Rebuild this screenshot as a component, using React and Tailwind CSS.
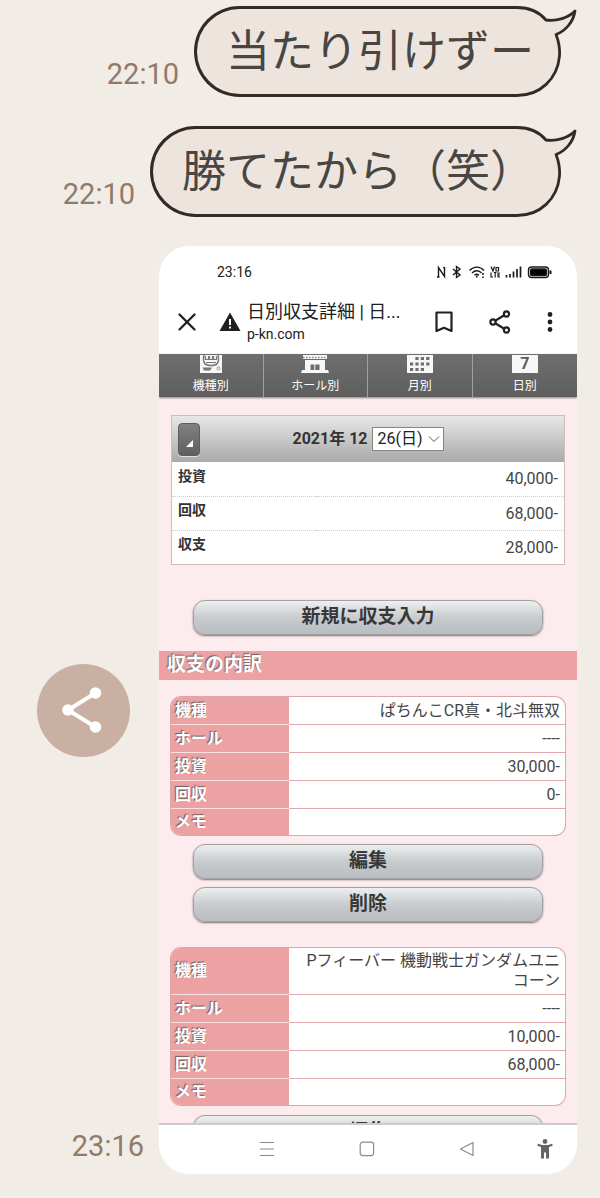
import React from 'react';
import { X } from 'lucide-react';

const summary = [
  { label: '投資', value: '40,000-' },
  { label: '回収', value: '68,000-' },
  { label: '収支', value: '28,000-' },
];

const records = [
  [
    { label: '機種', value: 'ぱちんこCR真・北斗無双' },
    { label: 'ホール', value: '----' },
    { label: '投資', value: '30,000-' },
    { label: '回収', value: '0-' },
    { label: 'メモ', value: '' },
  ],
  [
    { label: '機種', value: 'Pフィーバー 機動戦士ガンダムユニコーン' },
    { label: 'ホール', value: '----' },
    { label: '投資', value: '10,000-' },
    { label: '回収', value: '68,000-' },
    { label: 'メモ', value: '' },
  ],
];

function Time({ children }) {
  return <time className="text-[29px] leading-9 text-[#907b6a]">{children}</time>;
}

function Bubble({ time, children }) {
  return (
    <div className="flex items-end justify-end gap-[15px]">
      <div className="pb-[5px]">
        <Time>{time}</Time>
      </div>
      <div className="relative flex h-[91px] items-center pl-8 pr-[43px]">
        {/* Bubble outline: round left end + right cap with the tail */}
        <div className="absolute inset-0 flex">
          <div className="flex-1 rounded-l-full border-y-3 border-l-3 border-[#332a26] bg-[#ede5dd]" />
          <svg viewBox="0 0 64 91" className="h-full w-16" fill="none">
            <path
              d="M0 1.5H4C17 1.5 27 7 33 14C44 15.5 55 12 62 5C60.5 15 53.5 24.5 43 28.5C46 36 47 43 46.5 50C44.5 73 27 89.5 4 89.5H0"
              fill="#ede5dd"
              stroke="#332a26"
              strokeWidth="2.8"
              strokeLinejoin="round"
            />
          </svg>
        </div>
        <p className="relative whitespace-nowrap text-[44px] leading-[52px] text-[#484543]">{children}</p>
      </div>
    </div>
  );
}

function StatusIcons() {
  return (
    <svg viewBox="0 0 116 16" className="h-4 w-[116px]" fill="none" stroke="#1a1a1a" strokeWidth="1.4">
      {/* NFC */}
      <path d="M2.5 13V3.5L8.5 12.5V3M1 13H3.5M7.5 3L9 5" />
      {/* Bluetooth */}
      <path d="M17 5L24 11L20.5 13.5V2.5L24 5L17 11" />
      {/* Wi-Fi */}
      <path d="M33.5 6.5C38 2 44 2 48 6.5M36 9C39 6 43 6 45.5 9M38.5 11.2C40 9.8 41.5 9.8 43 11.2" />
      <path d="M40.8 11.5V13.5M47 9V11M47 12.5V14" strokeWidth="1.6" />
      {/* VoLTE */}
      <path d="M55 2.5L57 7L58.5 2.5M60 3.5H62.5V7H60ZM55 8.5V13H57M58 8.5H60.5M59.2 8.5V13.5M64 9H62V13H64M62 11H64" strokeWidth="1.2" />
      {/* Signal */}
      <path d="M70.5 11V13.5M74 10V13.5M77.5 7.5V13.5M81 5V13.5M84.5 2.5V13.5" strokeWidth="1.7" />
      {/* Battery */}
      <rect x="92.5" y="3" width="20" height="10.5" rx="3" />
      <rect x="94.5" y="5" width="16" height="6.5" rx="1.5" fill="#000" />
      <path d="M114.5 6.5V10" strokeWidth="2" />
    </svg>
  );
}

function MachineIcon() {
  return (
    <svg viewBox="0 0 24 19" className="h-[19px] w-6">
      <path d="M1 1H23V19H1Z" fill="#f7f7f7" />
      <path d="M5 1C3 10 7 11.5 12 11.5C17 11.5 21 10 19 1" fill="none" stroke="#777" strokeWidth="1.5" />
      <path d="M6.5 2V5.5H9.5V2M10.5 2V5.5H13.5V2M14.5 2V5.5H17.5V2M7 8.5H17" fill="none" stroke="#777" strokeWidth="1.2" />
      <path d="M3.5 13.5H13L11 16.5H5Z" fill="#777" />
      <circle cx="19.5" cy="14.5" r="1.5" fill="none" stroke="#999" />
    </svg>
  );
}

function HallIcon() {
  return (
    <svg viewBox="0 0 28 19" className="h-[19px] w-7">
      <path d="M2 1H26V5H2ZM4 6H24V16H27L28 19H0L1 16H4Z" fill="#f7f7f7" />
      <path d="M2 3.5H26" stroke="#888" strokeWidth="1.5" strokeDasharray="1.5 1.5" />
      <path d="M9.5 10.5H13.3V16H9.5ZM14.3 10.5H18.5V16H14.3Z" fill="#6d6d6d" />
    </svg>
  );
}

function MonthIcon() {
  return (
    <svg viewBox="0 0 26 19" className="h-[19px] w-[26px]">
      <path d="M0 1H26V19H0Z" fill="#f7f7f7" />
      <path d="M8.4 4.5H24M3 10H24M3 15.5H18" stroke="#6d6d6d" strokeWidth="3.2" strokeDasharray="3.2 2.2" />
    </svg>
  );
}

function DayIcon() {
  return (
    <span className="mt-px flex h-[18px] w-[26px] items-center justify-center bg-[#f7f7f7] text-base font-bold leading-none text-[#5c5c5c]">
      7
    </span>
  );
}

const tabs = [
  { label: '機種別', icon: <MachineIcon /> },
  { label: 'ホール別', icon: <HallIcon /> },
  { label: '月別', icon: <MonthIcon /> },
  { label: '日別', icon: <DayIcon /> },
];

function BrowserBar() {
  return (
    <header className="bg-white text-[#202020]">
      <div className="flex h-[52px] items-center justify-between pl-[58px] pr-[25px]">
        <span className="text-sm leading-5">23:16</span>
        <StatusIcons />
      </div>
      <div className="flex h-14 items-center pb-2 pl-3 pr-5">
        <button aria-label="閉じる" className="px-px">
          <X size={30} strokeWidth={1.8} />
        </button>
        <svg viewBox="0 0 22 20" className="ml-4 h-5 w-[22px] shrink-0">
          <path d="M11 0.5L21.5 19H0.5Z" fill="#202020" />
          <path d="M11 7V13M11 14.5V16.5" stroke="#fff" strokeWidth="2" />
        </svg>
        <div className="ml-1.5 min-w-0 flex-1">
          <p className="whitespace-nowrap text-lg leading-6">日別収支詳細 | 日...</p>
          <p className="text-sm leading-5">p-kn.com</p>
        </div>
        <div className="flex shrink-0 items-center">
          <button aria-label="ブックマーク">
            <svg viewBox="0 0 18 22" className="h-[22px] w-[18px]" fill="none" stroke="#202020" strokeWidth="2.2">
              <path d="M1.5 1.5H16.5V20L9 16.8L1.5 20Z" strokeLinejoin="round" />
            </svg>
          </button>
          <button aria-label="共有" className="ml-9">
            <svg viewBox="0 0 22 24" className="h-6 w-[22px]" fill="none" stroke="#202020" strokeWidth="2.2">
              <circle cx="17.5" cy="4" r="2.6" />
              <circle cx="4" cy="12" r="2.6" />
              <circle cx="17.5" cy="20" r="2.6" />
              <path d="M6.2 10.7L15.2 5.3M6.2 13.3L15.2 18.7" />
            </svg>
          </button>
          <button aria-label="メニュー" className="ml-8">
            <svg viewBox="0 0 14 22" className="h-[22px] w-3.5" fill="#202020">
              <circle cx="7" cy="3.5" r="2.4" />
              <circle cx="7" cy="11" r="2.4" />
              <circle cx="7" cy="18.5" r="2.4" />
            </svg>
          </button>
        </div>
      </div>
    </header>
  );
}

function GlossyButton({ children }) {
  return (
    <button className="block h-[35px] w-full rounded-xl border border-[#a39fa2] bg-linear-to-b from-[#edf0f0] via-[#c9ccce] via-50% to-[#b9bcc0] pb-0.5 text-[19px] font-bold leading-7 text-[#383838] shadow-[0_1px_2px_#777174]">
      {children}
    </button>
  );
}

function RecordTable({ rows }) {
  return (
    <div className="mx-3 overflow-hidden rounded-[10px] bg-white ring-1 ring-[#e0a5a8]">
      <table className="w-full table-fixed border-separate border-spacing-0 text-base leading-5">
        <tbody>
          {rows.map((row) => (
            <tr key={row.label} className="group h-7 last:h-[26px]">
              <th className="w-[118px] border-b border-[#fbe3e3] bg-[#eca1a2] pl-1 text-left font-bold text-white group-last:border-b-0 [text-shadow:-1px_-1px_1px_#6f5f62]">
                {row.label}
              </th>
              <td className="border-b border-[#dfa9ab] py-[3px] pl-1 pr-[5px] text-right text-[#454545] group-last:border-b-0">
                {row.value}
              </td>
            </tr>
          ))}
        </tbody>
      </table>
    </div>
  );
}

function DaySummary() {
  return (
    <section className="mx-3 border border-[#c9bfc0] bg-white text-[#333]">
      <div className="relative flex h-[46px] items-center justify-center gap-1 bg-linear-to-b from-[#e8e8e8] to-[#a9a9a9]">
        <button
          aria-label="前の日"
          className="absolute left-1.5 flex h-[33px] w-[22px] items-center justify-center rounded border border-[#5e5e5e] bg-linear-to-b from-[#808080] to-[#606060] pt-2 shadow-[0_1px_0_#e2e2e2]"
        >
          <svg viewBox="0 0 7 7" className="h-[7px] w-[7px]">
            <path d="M7 0V7H0Z" fill="#fff" />
          </svg>
        </button>
        <label htmlFor="day" className="text-base font-bold">2021年 12</label>
        <div className="relative">
          <select
            id="day"
            className="h-6 w-[72px] appearance-none border border-[#858585] bg-white pl-[5px] text-base leading-5 text-[#222]"
          >
            <option>26(日)</option>
          </select>
          <svg viewBox="0 0 12 8" className="pointer-events-none absolute right-1 top-2 h-2 w-3" fill="none" stroke="#555">
            <path d="M1 1.5L6 6.5L11 1.5" />
          </svg>
        </div>
      </div>
      <table className="w-full border-collapse">
        <tbody>
          {summary.map((row) => (
            <tr key={row.label} className="h-[34px] border-b border-dotted border-[#ccc] last:border-b-0">
              <th className="pb-1.5 pl-1.5 text-left text-sm font-bold">{row.label}</th>
              <td className="pr-1.5 pt-px text-right text-base text-[#454545]">{row.value}</td>
            </tr>
          ))}
        </tbody>
      </table>
    </section>
  );
}

function PhoneNav() {
  return (
    <footer className="flex h-[51px] items-center justify-end border-t-2 border-[#d3c9cb] bg-white pb-0.5 pr-6">
      <button aria-label="履歴" className="mr-[84px]">
        <svg viewBox="0 0 16 16" className="h-4 w-4" stroke="#8a8a8a" strokeWidth="1.2">
          <path d="M1 1.5H15M1 8H15M1 14.5H15" />
        </svg>
      </button>
      <button aria-label="ホーム" className="mr-[84px]">
        <svg viewBox="0 0 16 16" className="h-4 w-4" fill="none" stroke="#8a8a8a" strokeWidth="1.2">
          <rect x="1.2" y="1.2" width="13.4" height="13.4" rx="2.5" />
        </svg>
      </button>
      <button aria-label="戻る" className="mr-[62px]">
        <svg viewBox="0 0 16 16" className="h-4 w-4" fill="none" stroke="#8a8a8a" strokeWidth="1.2">
          <path d="M14 1.5V14.5L1.5 8Z" strokeLinejoin="round" />
        </svg>
      </button>
      <button aria-label="ユーザー補助">
        <svg viewBox="0 0 16 20" className="h-5 w-4" fill="#666">
          <circle cx="8" cy="2.5" r="2.4" />
          <path d="M0.8 4.8L5 6H11L15.2 4.8L15.7 6.8L12 8V19.5H9V13.5H7V19.5H4V8L0.3 6.8Z" />
        </svg>
      </button>
    </footer>
  );
}

function PhoneScreen() {
  return (
    <div className="min-w-0 flex-1 overflow-hidden rounded-[30px] bg-[#fdeced]">
      <BrowserBar />
      <nav className="grid grid-cols-4 bg-linear-to-b from-[#6e6e6e] to-[#5f5f5f] shadow-[0_1px_2px_#8a7f80]">
        {tabs.map((tab) => (
          <a
            key={tab.label}
            href="#"
            className="flex h-[43px] flex-col items-center justify-between border-r border-[#a0a0a0] pb-[3px] text-xs leading-4 text-white last:border-r-0"
          >
            {tab.icon}
            {tab.label}
          </a>
        ))}
      </nav>
      <div className="pt-[18px]">
        <DaySummary />
        <div className="mx-[34px] mt-[35px]">
          <GlossyButton>新規に収支入力</GlossyButton>
        </div>
        <h2 className="mb-[17px] mt-4 h-[29px] bg-[#eea1a2] pl-2 text-[19px] font-bold leading-7 text-white [text-shadow:-1px_-1px_1px_#6f5f62]">
          収支の内訳
        </h2>
        <RecordTable rows={records[0]} />
        <div className="mx-[34px] mb-[26px] mt-[9px] flex flex-col gap-2">
          <GlossyButton>編集</GlossyButton>
          <GlossyButton>削除</GlossyButton>
        </div>
        <RecordTable rows={records[1]} />
        {/* Scrolled under the phone's navigation bar */}
        <div className="mt-[9px] h-[9px] overflow-hidden px-[34px] pt-px">
          <GlossyButton>編集</GlossyButton>
        </div>
      </div>
      <PhoneNav />
    </div>
  );
}

export default function App() {
  return (
    <main
      lang="ja"
      className="flex min-h-screen flex-col gap-[29px] bg-[#f1ece6] pb-6 pr-[23px] pt-1.5 font-['Roboto','Noto_Sans_CJK_JP',sans-serif]"
    >
      <Bubble time="22:10">当たり引けずー</Bubble>
      <Bubble time="22:10">勝てたから（笑）</Bubble>
      <div className="flex">
        <div className="grid w-[159px] shrink-0 grid-rows-[1fr_auto_1fr] justify-items-end">
          <button
            aria-label="シェア"
            className="row-start-2 mr-[29px] flex h-[93px] w-[93px] items-center justify-center rounded-full bg-[#cab0a3] pr-1"
          >
            <svg viewBox="0 0 40 46" className="h-[46px] w-10" fill="#fff">
              <path d="M33.5 6L6 23L33.5 40" fill="none" stroke="#fff" strokeWidth="4" />
              <circle cx="33.5" cy="6" r="5.8" />
              <circle cx="6" cy="23" r="5.8" />
              <circle cx="33.5" cy="40" r="5.8" />
            </svg>
          </button>
          <div className="row-start-3 mr-[15px] self-end pb-2.5">
            <Time>23:16</Time>
          </div>
        </div>
        <PhoneScreen />
      </div>
    </main>
  );
}
